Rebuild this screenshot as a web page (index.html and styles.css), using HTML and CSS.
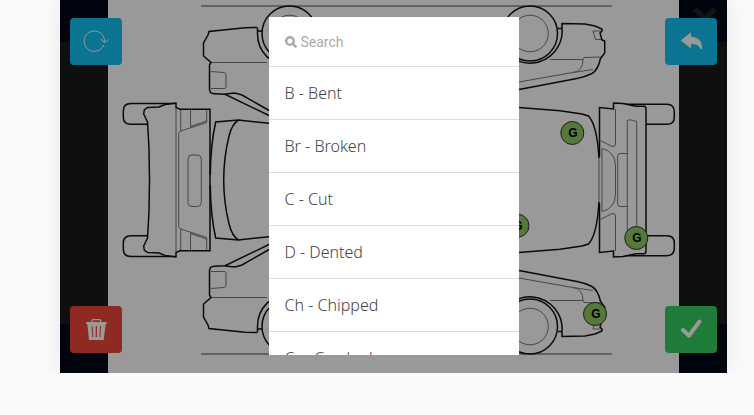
FILE: index.html
```html
<!DOCTYPE html>
<html lang="en">
<head>
    <meta charset="UTF-8">
    <meta name="viewport" content="width=device-width, initial-scale=1.0">
    <title>Vehicle Damage</title>
    <link rel="stylesheet" href="styles.css">
</head>
<body>

    <main class="modal">
        <!-- Vehicle diagram -->
        <svg class="diagram" viewBox="108 0 571 373" role="img" aria-label="Vehicle diagram">
            <defs>
                <!-- Side view -->
                <g id="side">
                    <path class="ground" d="M201 6H612"/>
                    <path class="thin" d="M211 62.5H267M320 62.5H500M211 71.5L224 72.5Q226 73 226 75V87Q226 88.5 224 88.5H211"/>
                    <path class="thin" d="M550 59.5H583L584 57.5L601 57M583 59.5Q583 71 573 72.5L519 82M573 72.5L593 69.5M601 31H593L595.5 39.5H602"/>
                    <path class="line" d="M257 27.5L245 27.7L209 31.5L208 35L203.5 43V56L211 62.5L209.5 65V89Q209.5 93.5 214 93.7L225 94.3L270 116"/>
                    <path class="line" d="M225 94L235 93L242 95L270 111"/>
                    <path class="line" d="M257.5 27.5V34A32 32 0 0 0 321.5 34M257.5 31H262"/>
                    <path class="line" d="M498 34A32 32 0 0 0 562 28V23.5L585 24L595 26L602 29V31L600 33L602 40L604.7 41V53L600.5 58.5Q598 70 592 73.5Q585 77 577 78.5L519 89.5M558 28.5H562"/>
                    <circle class="line" cx="289.5" cy="33.5" r="27.5"/>
                    <circle class="line" cx="530" cy="33.5" r="27.5"/>
                    <circle class="thin" cx="289.5" cy="33.5" r="18.3"/>
                    <circle class="thin" cx="530" cy="33.5" r="18.3"/>
                </g>
                <!-- Upper half of the top view -->
                <g id="half">
                    <path class="line" d="M176 103.5H131Q123.300 103.5 123.3 111V117Q123.3 124.3 131 124.3H147"/>
                    <path class="line" d="M149.5 180L149 148L147.5 122L143.7 114L144.3 110L147.5 107.5L159 107L165 104.5L176 103V107.5L180 109.3H210V180"/>
                    <path class="thin" d="M176 108V180M178.7 180V133.5L180.7 131V110M180.7 131L206.7 122.5V110M190.5 110V126.5L206.7 121"/>
                    <path class="line" d="M210.3 175Q210.5 145 215.7 122L238.5 120L269 123.3M238.5 120Q232 124 229 136Q223.7 158 223.7 180"/>
                    <path class="line" d="M519 107.5L560 110.7L582 114L588.5 116Q597 125 599 158"/>
                    <path class="thin" d="M599 158V180"/>
                    <path class="line" d="M599.5 157V107.5L613.5 109V103L623 103.5L636 106.3H644Q646 106.5 646 109V180"/>
                    <path class="line" d="M625 104.3H667Q674.3 104.5 674.3 112V117Q674.3 124.3 667 124.3H646"/>
                    <path class="thin" d="M615.5 109V144Q615.5 147 612 146.5L599.5 140M602 180V148.5Q615.5 152 615.5 166V180M627.3 153.5H620Q617.7 153.5 617.7 156V180M627.3 180V121Q627.5 118.5 636.7 121.5V180"/>
                </g>
            </defs>
            <use href="#side"/>
            <use href="#side" transform="matrix(1 0 0 -1 0 360)"/>
            <use href="#half"/>
            <use href="#half" transform="matrix(1 0 0 -1 0 360)"/>
            <rect class="thin" x="188" y="155" width="13.3" height="51.5" rx="4"/>

            <!-- Damage markers -->
            <g class="marker">
                <circle cx="572.3" cy="133" r="11.5"/>
                <text x="573" y="137">G</text>
                <circle cx="517.5" cy="225.7" r="11.5"/>
                <text x="518" y="230">G</text>
                <circle cx="636.3" cy="238" r="11.5"/>
                <text x="637" y="242">G</text>
                <circle cx="595" cy="314" r="11.5"/>
                <text x="596" y="318">G</text>
            </g>
        </svg>

        <div class="tools">
            <button class="close" type="button" aria-label="Close">
                <svg viewBox="0 0 26 26"><path d="M3 3L23 23M23 3L3 23"/></svg>
            </button>
            <div class="tool-row">
                <button class="tool calm" type="button" aria-label="Reset">
                    <svg class="stroke-icon" viewBox="0 0 32 32"><path d="M24.5 16A10.2 10.2 0 1 0 23.8 19M20.5 13L24.7 16.7L28.7 13.3"/></svg>
                </button>
                <button class="tool calm" type="button" aria-label="Undo">
                    <svg class="fill-icon" viewBox="0 0 32 32"><path d="M5.7 14.5L16 6.3V10.7Q27.5 11.5 27 23H25.5Q23.5 17.5 16 18V22.5Z"/></svg>
                </button>
            </div>
            <div class="tool-row">
                <button class="tool assertive" type="button" aria-label="Delete">
                    <svg class="fill-icon" viewBox="0 0 32 32"><path fill-rule="evenodd" d="M6 8H11.3V6.5Q11.3 5 13 5H19.7Q21.3 5 21.3 6.5V8H26.7V10H25.7L23.7 26H9L7.3 10H6ZM12.5 8H20V6.2H12.5ZM11.6 12L12.2 23H13.2L12.6 12ZM15.7 12V23H16.9V12ZM20 12L19.4 23H20.4L21 12Z"/></svg>
                </button>
                <button class="tool balanced" type="button" aria-label="Save">
                    <svg class="check-icon" viewBox="0 0 32 32"><path d="M8 16L14 21.7L24.5 7.5"/></svg>
                </button>
            </div>
        </div>

        <!-- Damage type picker -->
        <div class="backdrop">
            <div class="picker">
                <div class="search">
                    <label for="search">
                        <svg viewBox="0 0 12 12" role="img" aria-label="Search"><circle cx="5" cy="5" r="3.8"/><path d="M8 8L11.3 11.3"/></svg>
                    </label>
                    <input id="search" type="text" placeholder="Search">
                </div>
                <button class="item" type="button">B - Bent</button>
                <button class="item" type="button">Br - Broken</button>
                <button class="item" type="button">C - Cut</button>
                <button class="item" type="button">D - Dented</button>
                <button class="item" type="button">Ch - Chipped</button>
                <button class="item" type="button">Cr - Cracked</button>
            </div>
        </div>
    </main>

</body>
</html>
```
FILE: styles.css
```css
* {
    box-sizing: border-box;
}

body {
    margin: 0;
    background: #fafafa;
    font-family: "Noto Sans", sans-serif;
}

button {
    border: none;
    padding: 0;
    cursor: pointer;
}

.modal {
    position: relative;
    margin: 0 27px 0 60px;
    padding: 0 48px;
    background: linear-gradient(#00081a 42px, #191919 42px, #191919 calc(100% - 49px), #00081a calc(100% - 49px));
    box-shadow: 0 0 20px rgba(0, 0, 0, 0.08);
}

/* Diagram */
.diagram {
    display: block;
    width: 100%;
    background: #fff;
}

.line {
    fill: none;
    stroke: #111;
    stroke-width: 1.5;
}

.thin {
    fill: none;
    stroke: #777;
    stroke-width: 1;
}

.ground {
    stroke: #888;
    stroke-width: 1.5;
}

.marker circle {
    fill: #8fc95f;
    stroke: #333;
    stroke-width: 1;
}

.marker text {
    font: bold 12px "Liberation Sans", Arial, sans-serif;
    text-anchor: middle;
}

/* Corner buttons */
.tools {
    position: absolute;
    inset: 0;
    display: flex;
    flex-direction: column;
    justify-content: space-between;
    padding: 18px 10px 20px;
}

.tool-row {
    display: flex;
    justify-content: space-between;
    position: relative;
}

.tool {
    display: flex;
    align-items: center;
    justify-content: center;
    width: 52px;
    height: 47px;
    border-radius: 4px;
}

.tool svg {
    width: 32px;
    height: 32px;
}

.calm {
    background: #11c1f3;
}

.assertive {
    background: #ef473a;
}

.balanced {
    background: #33cd5f;
}

.fill-icon {
    fill: #fff;
}

.stroke-icon,
.check-icon {
    fill: none;
    stroke: #fff;
}

.check-icon {
    stroke-width: 4;
    stroke-linecap: round;
    stroke-linejoin: round;
}

.close {
    position: absolute;
    top: 6px;
    right: 9px;
    width: 26px;
    height: 26px;
    background: none;
}

.close svg {
    display: block;
    fill: none;
    stroke: #222;
    stroke-width: 5;
}

/* Picker */
.backdrop {
    position: absolute;
    inset: 0;
    display: flex;
    justify-content: center;
    padding: 17px 0 18px;
    background: rgba(0, 0, 0, 0.4);
}

.picker {
    display: flex;
    flex-direction: column;
    width: 250px;
    background: #fff;
    overflow: hidden;
}

.search {
    display: flex;
    flex: none;
    align-items: center;
    gap: 4px;
    height: 50px;
    padding: 0 16px;
    border-bottom: 1px solid #ddd;
}

.search svg {
    display: block;
    width: 12px;
    height: 12px;
    fill: none;
    stroke: #aaa;
    stroke-width: 2.5;
}

.search input {
    flex: 1;
    min-width: 0;
    border: none;
    padding: 0;
    outline: none;
    font: 14px Roboto, sans-serif;
}

.search input::placeholder {
    color: #aaa;
}

.item {
    flex: none;
    height: 53px;
    padding: 0 16px;
    border-bottom: 1px solid #ddd;
    background: #fff;
    color: #444;
    font: 300 16px "Noto Sans", sans-serif;
    text-align: left;
}
```
